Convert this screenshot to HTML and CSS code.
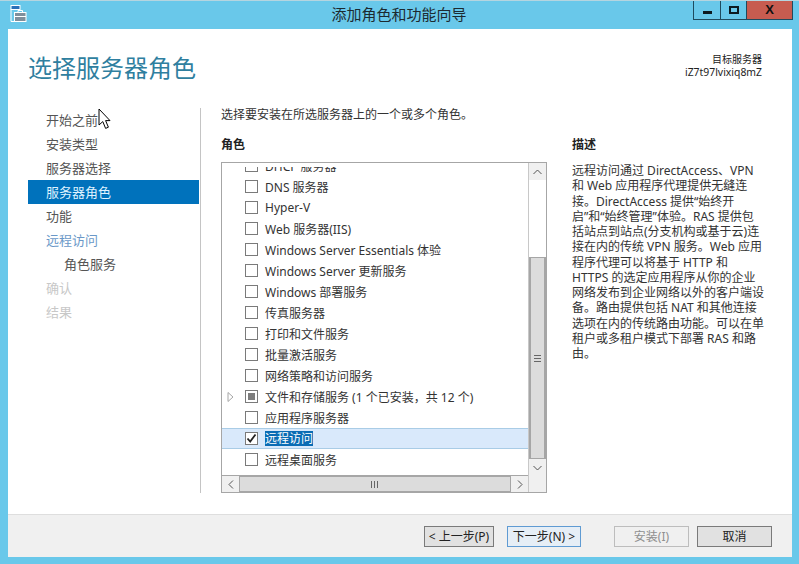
FILE: index.html
```html
<!DOCTYPE html>
<html lang="zh-CN">
  <head>
    <meta charset="UTF-8" />
    <title>添加角色和功能向导</title>
    <link rel="stylesheet" href="styles.css">
  </head>

  <body>
    <div class="window">
      <div class="titlebar">
        <svg class="app-icon" width="17" height="17" viewBox="0 0 17 17">
          <rect x="1" y="0.5" width="9" height="4" fill="#2a70b8" stroke="#fff" />
          <path d="M1 4.5V16.5H5" fill="none" stroke="#fff" />
          <rect x="4.5" y="7.5" width="11.5" height="9" fill="#7f8f9c" stroke="#fff" />
          <path d="M8 7.5V5.5H12.5V7.5M4.5 11.5H16" fill="none" stroke="#fff" />
        </svg>
        <div class="title">添加角色和功能向导</div>
        <div class="win-buttons">
          <div class="win-btn min"><span class="min-bar"></span></div>
          <div class="win-btn max"><span class="max-box"></span></div>
          <div class="win-btn close">X</div>
        </div>
      </div>

      <div class="panel">
        <div class="header">
          <h1>选择服务器角色</h1>
          <div class="target">
            <div>目标服务器</div>
            <div class="target-name">iZ7t97lvixiq8mZ</div>
          </div>
        </div>

        <div class="body">
          <div class="nav">
            <div class="nav-item">开始之前</div>
            <div class="nav-item">安装类型</div>
            <div class="nav-item">服务器选择</div>
            <div class="nav-item active">服务器角色</div>
            <div class="nav-item">功能</div>
            <div class="nav-item link">远程访问</div>
            <div class="nav-item sub">角色服务</div>
            <div class="nav-item off">确认</div>
            <div class="nav-item off">结果</div>
          </div>

          <div class="content">
            <div class="intro">选择要安装在所选服务器上的一个或多个角色。</div>
            <div class="columns">
              <div class="roles">
                <div class="label">角色</div>
                <div class="listbox">
                  <div class="list-main">
                    <div class="rows">
                      <div class="rows-inner">
                        <div class="row"><span class="box"></span><span>DHCP 服务器</span></div>
                        <div class="row"><span class="box"></span><span>DNS 服务器</span></div>
                        <div class="row"><span class="box"></span><span>Hyper-V</span></div>
                        <div class="row"><span class="box"></span><span>Web 服务器(IIS)</span></div>
                        <div class="row"><span class="box"></span><span>Windows Server Essentials 体验</span></div>
                        <div class="row"><span class="box"></span><span>Windows Server 更新服务</span></div>
                        <div class="row"><span class="box"></span><span>Windows 部署服务</span></div>
                        <div class="row"><span class="box"></span><span>传真服务器</span></div>
                        <div class="row"><span class="box"></span><span>打印和文件服务</span></div>
                        <div class="row"><span class="box"></span><span>批量激活服务</span></div>
                        <div class="row"><span class="box"></span><span>网络策略和访问服务</span></div>
                        <div class="row">
                          <svg class="arrow" width="7" height="10" viewBox="0 0 7 10"><path d="M1 0.5L6 5L1 9.5Z" fill="#fff" stroke="#a6a6a6" /></svg>
                          <span class="box partial"></span><span>文件和存储服务 (1 个已安装，共 12 个)</span>
                        </div>
                        <div class="row"><span class="box"></span><span>应用程序服务器</span></div>
                        <div class="row selected">
                          <span class="box">
                            <svg width="11" height="11" viewBox="0 0 11 11"><path d="M1.5 5.5L4.2 8.5L9.5 1.5" fill="none" stroke="#222" stroke-width="1.8" /></svg>
                          </span>
                          <span class="sel-text">远程访问</span>
                        </div>
                        <div class="row"><span class="box"></span><span>远程桌面服务</span></div>
                      </div>
                    </div>
                    <div class="hbar">
                      <div class="sb-btn"><svg width="6" height="9" viewBox="0 0 6 9"><path d="M5 0.5L1 4.5L5 8.5" fill="none" stroke="#555" /></svg></div>
                      <div class="hthumb"><span class="hgrip"></span></div>
                      <div class="sb-btn"><svg width="6" height="9" viewBox="0 0 6 9"><path d="M1 0.5L5 4.5L1 8.5" fill="none" stroke="#555" /></svg></div>
                    </div>
                  </div>
                  <div class="vbar">
                    <div class="sb-btn v"><svg width="9" height="6" viewBox="0 0 9 6"><path d="M0.5 5L4.5 1L8.5 5" fill="none" stroke="#555" /></svg></div>
                    <div class="vtrack"><div class="vthumb"><span class="vgrip"></span></div></div>
                    <div class="sb-btn v"><svg width="9" height="6" viewBox="0 0 9 6"><path d="M0.5 1L4.5 5L8.5 1" fill="none" stroke="#555" /></svg></div>
                    <div class="corner"></div>
                  </div>
                </div>
              </div>

              <div class="desc">
                <div class="label">描述</div>
                <p>远程访问通过 DirectAccess、VPN<br>和 Web 应用程序代理提供无缝连<br>接。DirectAccess 提供“始终开<br>启”和“始终管理”体验。RAS 提供包<br>括站点到站点(分支机构或基于云)连<br>接在内的传统 VPN 服务。Web 应用<br>程序代理可以将基于 HTTP 和<br>HTTPS 的选定应用程序从你的企业<br>网络发布到企业网络以外的客户端设<br>备。路由提供包括 NAT 和其他连接<br>选项在内的传统路由功能。可以在单<br>租户或多租户模式下部署 RAS 和路<br>由。</p>
              </div>
            </div>
          </div>
        </div>

        <div class="footer">
          <button class="btn prev">&lt; 上一步(P)</button>
          <button class="btn next">下一步(N) &gt;</button>
          <button class="btn install" disabled>安装(I)</button>
          <button class="btn cancel">取消</button>
        </div>
      </div>

      <svg class="cursor" width="13" height="22" viewBox="0 0 13 22">
        <path d="M1 1V17L4.8 13.6L7.6 20.4L10.4 19.2L7.6 12.6H12Z" fill="#fff" stroke="#000" />
      </svg>
    </div>
  </body>
</html>
```

FILE: styles.css
```css
body {
  margin: 0;
  font-family: "Noto Sans", "Noto Sans CJK SC", sans-serif;
  font-size: 12px;
  color: #333;
}

.window {
  position: relative;
  display: flex;
  flex-direction: column;
  width: 799px;
  height: 564px;
  box-sizing: border-box;
  padding: 0 7px 7px 8px;
  overflow: hidden;
  background-color: #69c8ea;
  border-top: 1px solid #b5d5e0;
}

.titlebar {
  position: relative;
  display: flex;
  justify-content: center;
  height: 28px;
  flex-shrink: 0;
}

.app-icon {
  position: absolute;
  left: 2px;
  top: 4px;
}

.title {
  margin-right: 2px;
  font-size: 15px;
  line-height: 27px;
  color: #1c2a30;
}

.win-buttons {
  position: absolute;
  right: -1px;
  top: -1px;
  display: flex;
  height: 20px;
}

.win-btn {
  display: flex;
  justify-content: center;
  align-items: center;
  box-sizing: border-box;
  border: 1px solid #1f4b5e;
  border-top: 0;
}

.min {
  width: 28px;
}

.max {
  width: 26px;
  border-left: 0;
}

.close {
  width: 46px;
  border-left: 0;
  background-color: #c75c50;
  font-family: "Liberation Sans", sans-serif;
  font-size: 13px;
  font-weight: bold;
  color: #111;
}

.min-bar {
  width: 9px;
  height: 3px;
  margin-top: 5px;
  background-color: #0d1a20;
}

.max-box {
  width: 6px;
  height: 4px;
  border: 2px solid #0d1a20;
}

.panel {
  display: flex;
  flex-direction: column;
  flex: 1;
  background-color: #fff;
}

.header {
  display: flex;
  justify-content: space-between;
  height: 79px;
  padding-left: 20px;
  padding-right: 30px;
}

h1 {
  margin: 23px 0 0;
  font-size: 24px;
  font-weight: normal;
  line-height: 32px;
  color: #2f7f9f;
}

.target {
  margin-top: 24px;
  font-size: 10px;
  line-height: 13px;
  text-align: right;
  color: #222;
}

.target-name {
  font-size: 10.4px;
}

.body {
  display: flex;
  height: 385px;
  margin-bottom: 21px;
}

.nav {
  width: 172px;
  margin-left: 20px;
  border-right: 1px solid #c4c4c4;
}

.nav-item {
  width: 171px;
  height: 24px;
  padding-left: 18px;
  box-sizing: border-box;
  font-size: 13px;
  line-height: 24px;
  color: #555;
}

.nav-item.active {
  background-color: #0072bc;
  color: #dff3ff;
}

.nav-item.link {
  color: #6a98c8;
}

.nav-item.sub {
  padding-left: 36px;
}

.nav-item.off {
  color: #c8c8c8;
}

.content {
  flex: 1;
  padding-left: 20px;
}

.intro {
  line-height: 14px;
}

.columns {
  display: flex;
  gap: 25px;
  margin-top: 16px;
}

.roles {
  width: 326px;
}

.label {
  font-weight: bold;
  line-height: 14px;
  color: #222;
}

.listbox {
  display: flex;
  height: 331px;
  box-sizing: border-box;
  margin-top: 10px;
  border: 1px solid #a6a6a6;
}

.list-main {
  display: flex;
  flex-direction: column;
  width: 307px;
}

.rows {
  flex: 1;
  margin-top: 4px;
  overflow: hidden;
}

.rows-inner {
  margin-top: -12px;
}

.row {
  display: grid;
  grid-template-columns: 19px 13px auto;
  align-items: center;
  justify-items: start;
  height: 21px;
  padding-left: 4px;
  box-sizing: border-box;
  white-space: nowrap;
}

.row > span:last-child {
  grid-column: 3;
  margin-left: 7px;
}

.box {
  grid-column: 2;
  display: flex;
  justify-content: center;
  align-items: center;
  width: 13px;
  height: 13px;
  box-sizing: border-box;
  border: 1px solid #7a7a7a;
  background-color: #fff;
}

.partial::after {
  content: "";
  width: 7px;
  height: 7px;
  background-color: #7d7d7d;
}

.arrow {
  grid-column: 1;
  margin-left: 1px;
}

.row.selected {
  background-color: #d9e9fb;
  border-top: 1px solid #a9cce6;
  border-bottom: 1px solid #a9cce6;
}

.sel-text {
  background-color: #0a6cb4;
  color: #fff;
  line-height: 15px;
}

.hbar {
  display: flex;
  height: 16px;
  border-top: 1px solid #a6a6a6;
  background-color: #f0f0f0;
}

.sb-btn {
  display: flex;
  justify-content: center;
  align-items: center;
  width: 17px;
  flex-shrink: 0;
  background-color: #f0f0f0;
}

.sb-btn.v {
  width: auto;
  height: 17px;
}

.hthumb {
  display: flex;
  justify-content: center;
  align-items: center;
  flex: 1;
  box-sizing: border-box;
  border: 1px solid #a6a6a6;
  background-color: #dcdcdc;
}

.hgrip {
  width: 8px;
  height: 7px;
  background: repeating-linear-gradient(90deg, #666 0 1px, #dcdcdc 1px 3px);
}

.vbar {
  display: flex;
  flex-direction: column;
  width: 18px;
  border-left: 1px solid #c8c8c8;
  box-sizing: border-box;
}

.vtrack {
  flex: 1;
  padding-top: 77px;
  display: flex;
  flex-direction: column;
}

.vthumb {
  display: flex;
  justify-content: center;
  align-items: center;
  flex: 1;
  box-sizing: border-box;
  border: 1px solid #a6a6a6;
  border-left-width: 2px;
  border-right-width: 2px;
  background-color: #dcdcdc;
}

.vgrip {
  width: 7px;
  height: 8px;
  background: repeating-linear-gradient(0deg, #666 0 1px, #dcdcdc 1px 3px);
}

.corner {
  height: 16px;
  flex-shrink: 0;
  background-color: #f0f0f0;
}

.desc {
  width: 200px;
}

.desc p {
  margin: 11px 0 0;
  line-height: 15.25px;
  white-space: nowrap;
}

.footer {
  display: flex;
  flex: 1;
  align-items: flex-start;
  padding: 11px 20px 0 0;
  justify-content: flex-end;
  background-color: #f0f0f0;
  border-top: 1px solid #dedede;
}

.btn {
  height: 21px;
  padding: 0;
  box-sizing: border-box;
  font-family: inherit;
  font-size: 12px;
  line-height: 18px;
  color: #222;
  background-color: #e1e1e1;
  border: 1px solid #7a7a7a;
}

.prev {
  width: 70px;
  margin-right: 13px;
}

.next {
  width: 74px;
  margin-right: 33px;
  background-color: #e6eef6;
  border-color: #5f9bd3;
}

.install {
  width: 75px;
  margin-right: 8px;
  color: #8f8f8f;
  background-color: #f0f0f0;
  border-color: #bdbdbd;
}

.cancel {
  width: 75px;
}

.cursor {
  position: absolute;
  left: 98px;
  top: 107px;
}
```
